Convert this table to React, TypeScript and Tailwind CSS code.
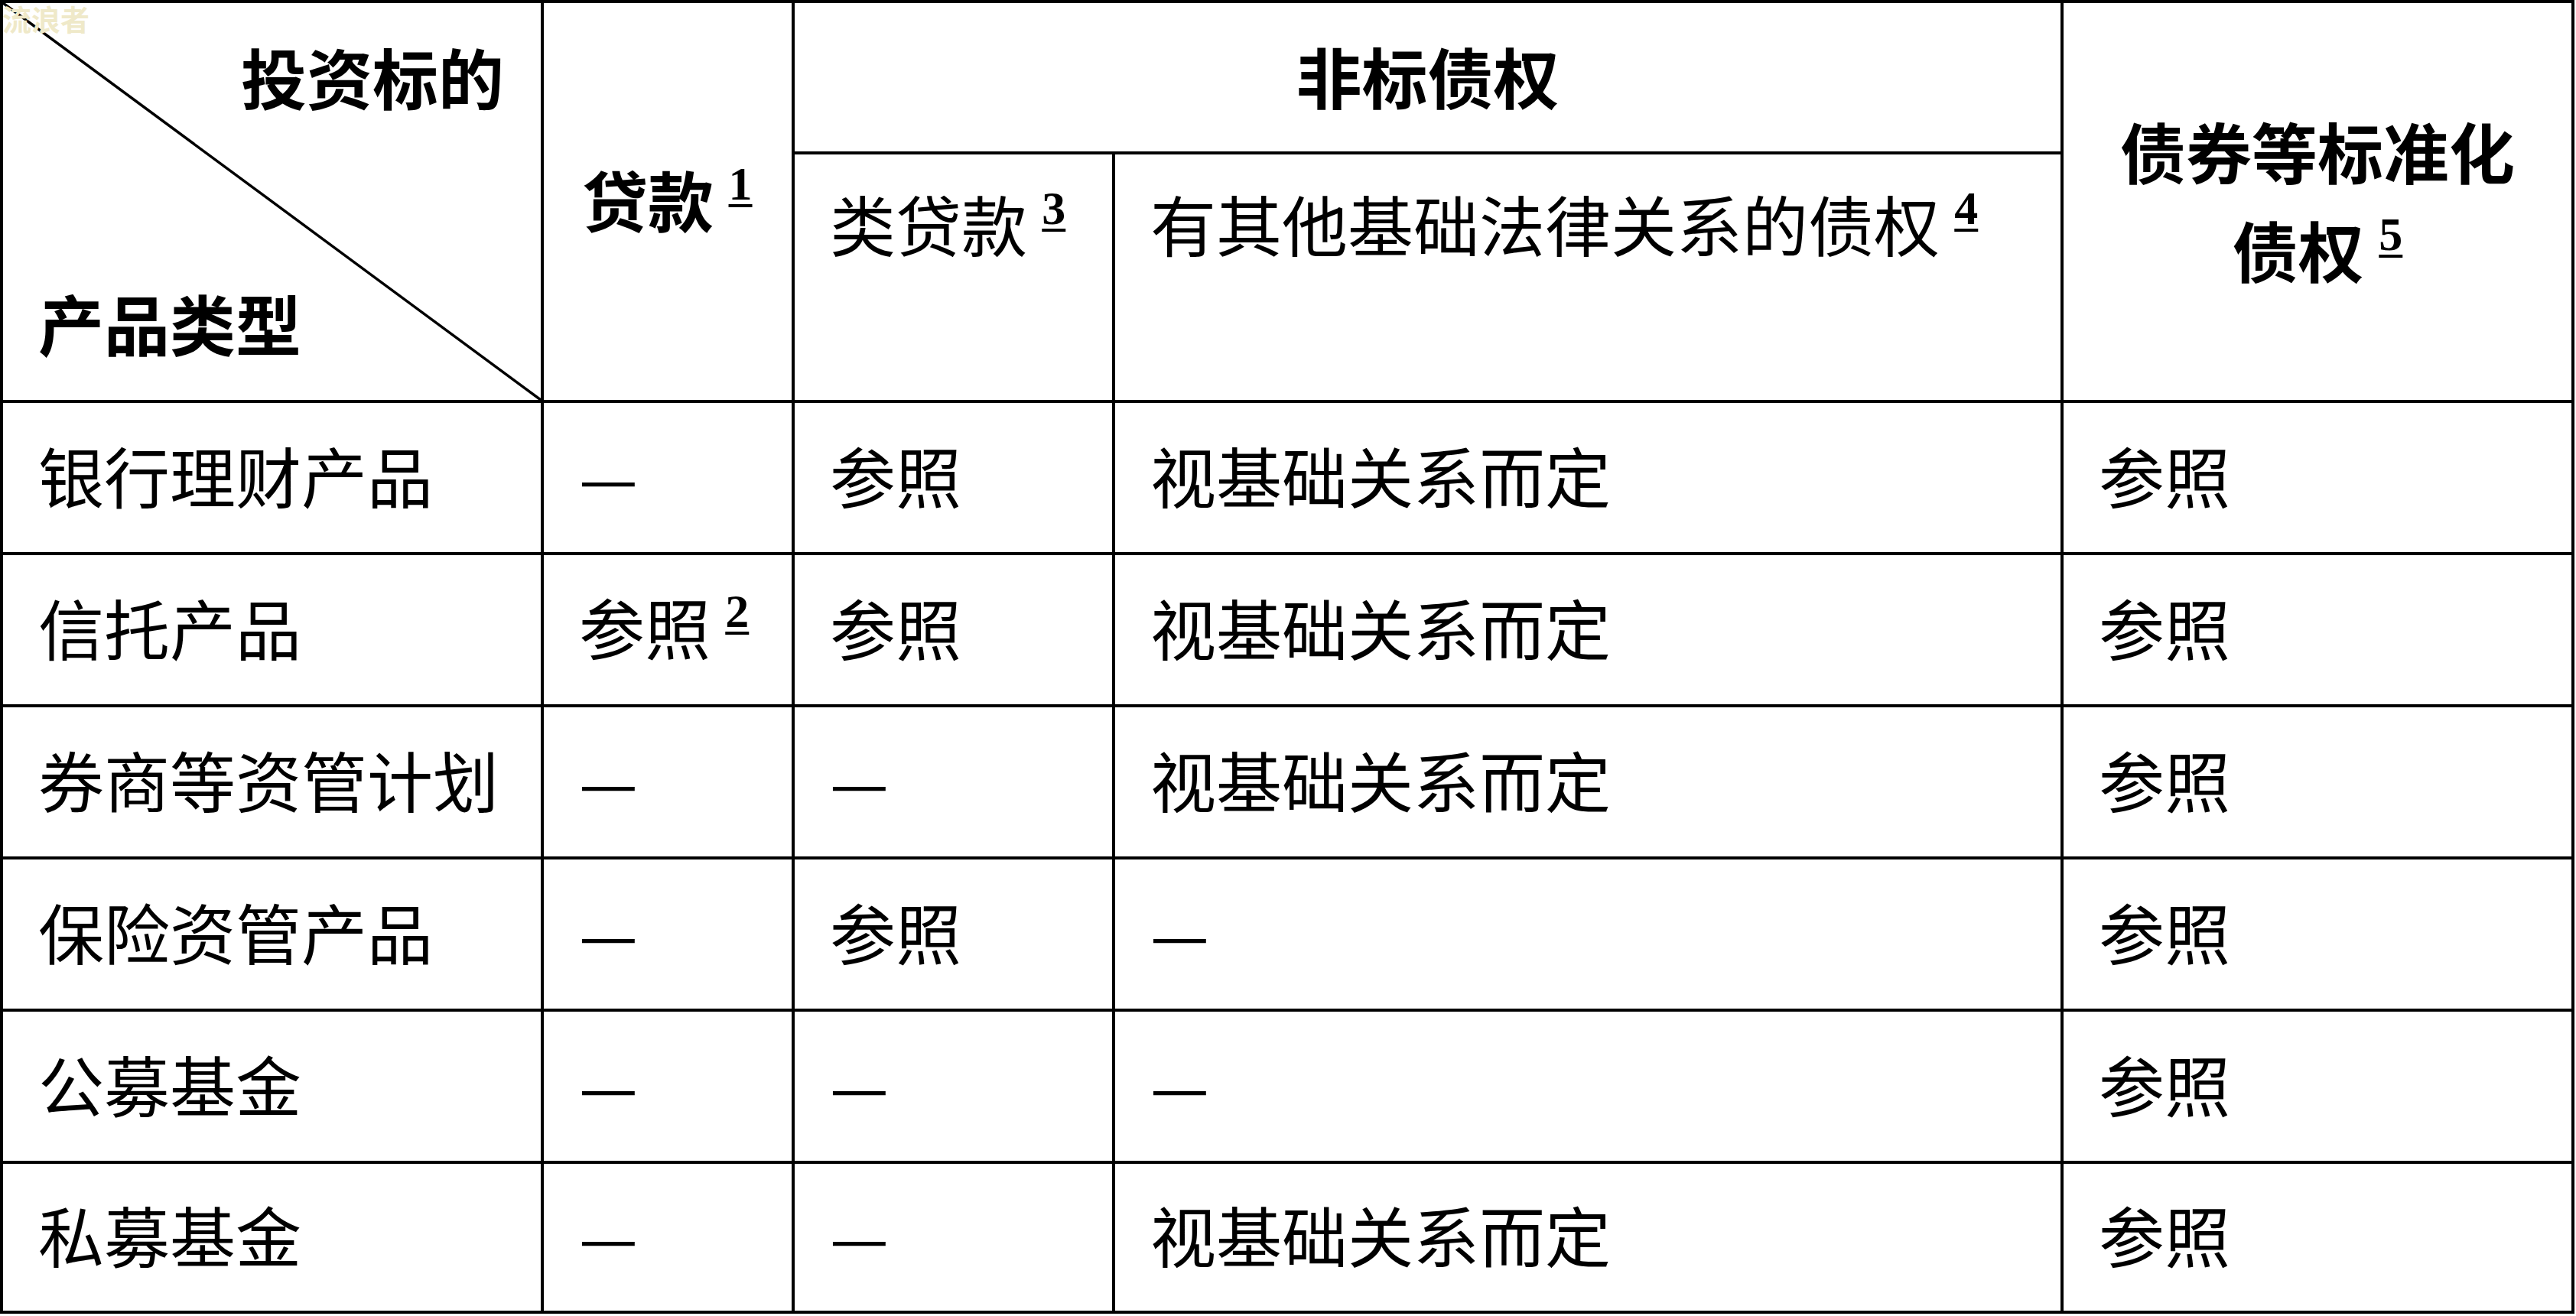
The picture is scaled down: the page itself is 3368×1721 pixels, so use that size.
import React from "react";

type Cell = string | { t: string; n: number };

const rows: Cell[][] = [
  ["银行理财产品", "—", "参照", "视基础关系而定", "参照"],
  ["信托产品", { t: "参照", n: 2 }, "参照", "视基础关系而定", "参照"],
  ["券商等资管计划", "—", "—", "视基础关系而定", "参照"],
  ["保险资管产品", "—", "参照", "—", "参照"],
  ["公募基金", "—", "—", "—", "参照"],
  ["私募基金", "—", "—", "视基础关系而定", "参照"],
];

// underlined footnote number, raised like the original Word superscript
function Note({ n }: { n: number }) {
  return (
    <span className="relative -top-[36px] font-['Liberation_Serif',serif] text-[62px] font-bold underline decoration-[4px] underline-offset-[6px]">
      {n}
    </span>
  );
}

function Text({ c }: { c: Cell }) {
  if (typeof c === "string") return <>{c}</>;
  return (
    <>
      {c.t} <Note n={c.n} />
    </>
  );
}

export default function App() {
  return (
    <div className="relative w-[3368px] h-[1721px] overflow-hidden bg-white text-black font-['Noto_Sans_CJK_SC',sans-serif]">
      <table className="table-fixed border-collapse w-[3366px] text-[86px] leading-[1.2]">
        <colgroup>
          <col className="w-[707px]" />
          <col className="w-[328px]" />
          <col className="w-[419px]" />
          <col className="w-[1240px]" />
          <col className="w-[668px]" />
        </colgroup>
        <tbody>
          <tr className="h-[198px]">
            <td rowSpan={2} className="relative border-4 border-black p-0 align-top">
              {/* diagonal split of the corner header */}
              <svg className="absolute inset-0 w-full h-full" preserveAspectRatio="none" viewBox="0 0 100 100">
                <line x1="0" y1="0" x2="100" y2="100" stroke="#000" strokeWidth="3.5" vectorEffect="non-scaling-stroke" />
              </svg>
              <div className="relative h-[519px] flex flex-col justify-between pl-[46px] pr-[48px] pt-[44px] pb-[50px] font-bold">
                <div className="text-right">投资标的</div>
                <div>产品类型</div>
              </div>
            </td>
            <td rowSpan={2} className="border-4 border-black pl-[50px] pb-[6px] align-middle font-bold">
              贷款 <Note n={1} />
            </td>
            <td colSpan={2} className="border-4 border-black pb-[4px] text-center align-middle font-bold">
              非标债权
            </td>
            <td rowSpan={2} className="border-4 border-black pb-[6px] text-center align-middle font-bold leading-[1.5]">
              债券等标准化
              <br />
              债权 <Note n={5} />
            </td>
          </tr>
          <tr className="h-[325px]">
            <td className="border-4 border-black pl-[46px] pt-[38px] align-top">
              类贷款 <Note n={3} />
            </td>
            <td className="border-4 border-black pl-[46px] pt-[38px] align-top">
              有其他基础法律关系的债权 <Note n={4} />
            </td>
          </tr>
          {rows.map((r, i) => (
            <tr key={i} className={i === rows.length - 1 ? "h-[196px]" : "h-[199px]"}>
              {r.map((c, j) => (
                <td key={j} className="border-4 border-black pl-[46px] pb-[8px] align-middle whitespace-nowrap">
                  <Text c={c} />
                </td>
              ))}
            </tr>
          ))}
        </tbody>
      </table>

      {/* watermark in the corner */}
      <div className="absolute top-[2px] left-[3px] text-[38px] leading-[1.15] font-bold text-[#efe9c9]">流浪者</div>
    </div>
  );
}
